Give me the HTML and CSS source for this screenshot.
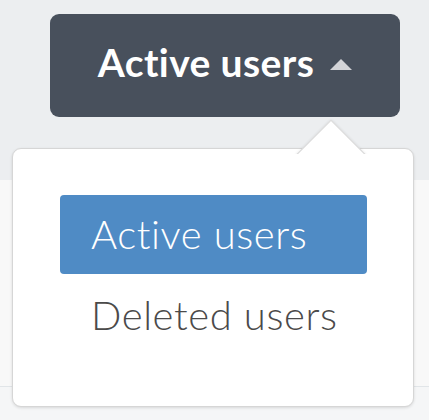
FILE: index.html
```html
<!DOCTYPE html>
<html lang="en">

<head>
    <meta charset="UTF-8">
    <meta name="viewport" content="width=device-width, initial-scale=1.0">
    <title>Users</title>
    <link rel="stylesheet" href="styles.css">
</head>

<body>
    <header class="toolbar">
        <button class="filter-btn">
            Active users
            <svg class="caret" width="22" height="11" viewBox="0 0 22 11">
                <path d="M11 0 L22 11 L0 11 Z" fill="#d3d4d8" />
            </svg>
        </button>
    </header>

    <main class="content"></main>

    <div class="menu">
        <a href="#" class="menu-item active">Active users</a>
        <a href="#" class="menu-item">Deleted users</a>
    </div>
</body>

</html>
```

FILE: styles.css
```css
body {
    font-family: Lato, "Noto Sans", sans-serif;
    margin: 0;
    padding: 0;
    background-color: #f5f6f7;
    height: 420px;
    overflow: hidden;
}

.toolbar {
    background-color: #eceef0;
    height: 180px;
    padding: 14px 0 0 50px;
    box-sizing: border-box;
}

.filter-btn {
    width: 350px;
    height: 103px;
    background-color: #48505c;
    border: none;
    border-radius: 9px;
    color: #fff;
    font-family: inherit;
    font-weight: bold;
    font-size: 39px;
    letter-spacing: 0.4px;
    display: flex;
    align-items: center;
    justify-content: center;
    gap: 16px;
    padding: 0 0 8px 0;
    cursor: pointer;
}

.caret {
    margin-top: 6px;
}

.content {
    display: block;
    background-color: #f8f8f8;
    height: 206px;
    border-bottom: 1px solid #e1e5e8;
}

.menu {
    position: absolute;
    left: 12px;
    top: 148px;
    width: 402px;
    height: 259px;
    background-color: #fff;
    border: 1px solid #d6d6d6;
    border-radius: 9px;
    box-shadow: 0 1px 3px rgba(0, 0, 0, 0.12);
    padding-top: 46px;
    box-sizing: border-box;
}

.menu::before {
    content: "";
    position: absolute;
    left: 293px;
    top: -19px;
    width: 48px;
    height: 48px;
    background-color: #fff;
    border: 1px solid #d6d6d6;
    box-shadow: 0 0 3px rgba(0, 0, 0, 0.1);
    transform: rotate(45deg);
}

.menu::after {
    content: "";
    position: absolute;
    left: 280px;
    top: 5px;
    width: 80px;
    height: 36px;
    background-color: #fff;
}

.menu-item {
    position: relative;
    z-index: 1;
    display: block;
    width: 307px;
    height: 79px;
    line-height: 79px;
    margin-left: 47px;
    padding-left: 31px;
    box-sizing: border-box;
    border-radius: 4px;
    color: #4b4a4a;
    text-decoration: none;
    font-size: 40px;
    font-weight: 300;
    letter-spacing: 0.6px;
}

.menu-item + .menu-item {
    margin-top: 2px;
}

.menu-item.active {
    background-color: #4f8bc5;
    color: #fff;
}
```
